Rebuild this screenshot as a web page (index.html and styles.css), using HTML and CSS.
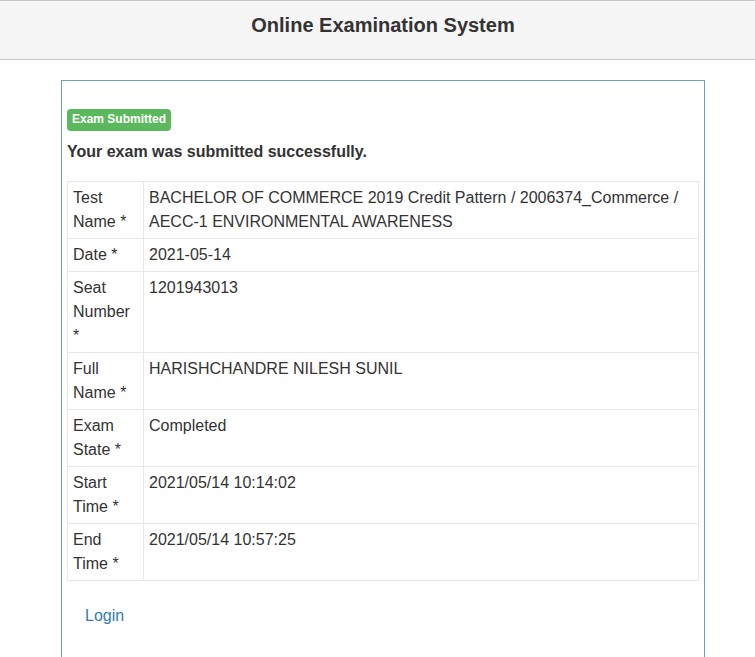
FILE: index.html
```html
<!DOCTYPE html>
<html>
<head>
<meta charset="utf-8">
<title>Online Examination System</title>
<link rel="stylesheet" href="styles.css">
</head>
<body>
<header class="topbar">
  <h1 class="title">Online Examination System</h1>
</header>
<main class="panel">
  <span class="badge">Exam Submitted</span>
  <h2 class="message">Your exam was submitted successfully.</h2>
  <table class="details">
    <tr><th>Test Name *</th><td>BACHELOR OF COMMERCE 2019 Credit Pattern / 2006374_Commerce / AECC-1 ENVIRONMENTAL AWARENESS</td></tr>
    <tr><th>Date *</th><td>2021-05-14</td></tr>
    <tr><th>Seat Number *</th><td>1201943013</td></tr>
    <tr><th>Full Name *</th><td>HARISHCHANDRE NILESH SUNIL</td></tr>
    <tr><th>Exam State *</th><td>Completed</td></tr>
    <tr><th>Start Time *</th><td>2021/05/14 10:14:02</td></tr>
    <tr><th>End Time *</th><td>2021/05/14 10:57:25</td></tr>
  </table>
  <div class="actions"><a class="login" href="#">Login</a></div>
</main>
</body>
</html>
```
FILE: styles.css
```css
html, body {
  margin: 0;
  padding: 0;
  background: #fff;
  font-family: "Liberation Sans", Arial, sans-serif;
  color: #333;
  overflow: hidden;
}

.topbar {
  height: 58px;
  background: #f5f5f5;
  border-top: 1px solid #c4c4c4;
  border-bottom: 1px solid #c4c4c4;
  display: flex;
  align-items: center;
  justify-content: center;
  padding-left: 11px;
  box-sizing: content-box;
}

.title {
  margin: 0;
  margin-top: -10px;
  font-size: 20px;
  font-weight: bold;
  color: #333;
  line-height: 24px;
}

.panel {
  margin: 20px 0 0 61px;
  width: 632px;
  min-height: 600px;
  border: 1px solid #6aa3b8;
  padding: 28px 5px 0 5px;
  display: flex;
  flex-direction: column;
  align-items: flex-start;
}

.badge {
  display: inline-block;
  background: #5cb85c;
  color: #fff;
  font-size: 12px;
  font-weight: bold;
  line-height: 12px;
  padding: 4px 5px 6px;
  border-radius: 4px;
}

.message {
  margin: 9px 0 17px;
  font-size: 16px;
  font-weight: bold;
  line-height: 24px;
  color: #333;
}

.details {
  width: 100%;
  border-collapse: collapse;
  font-size: 16px;
  line-height: 24px;
}

.details th,
.details td {
  border: 1px solid #e8e8e8;
  padding: 4px 5px;
  text-align: left;
  vertical-align: top;
  font-weight: normal;
  color: #333;
}

.details th {
  width: 65px;
}

.actions {
  padding: 23px 18px;
}

.login {
  color: #337ab7;
  text-decoration: none;
  font-size: 16px;
  line-height: 24px;
}
```
